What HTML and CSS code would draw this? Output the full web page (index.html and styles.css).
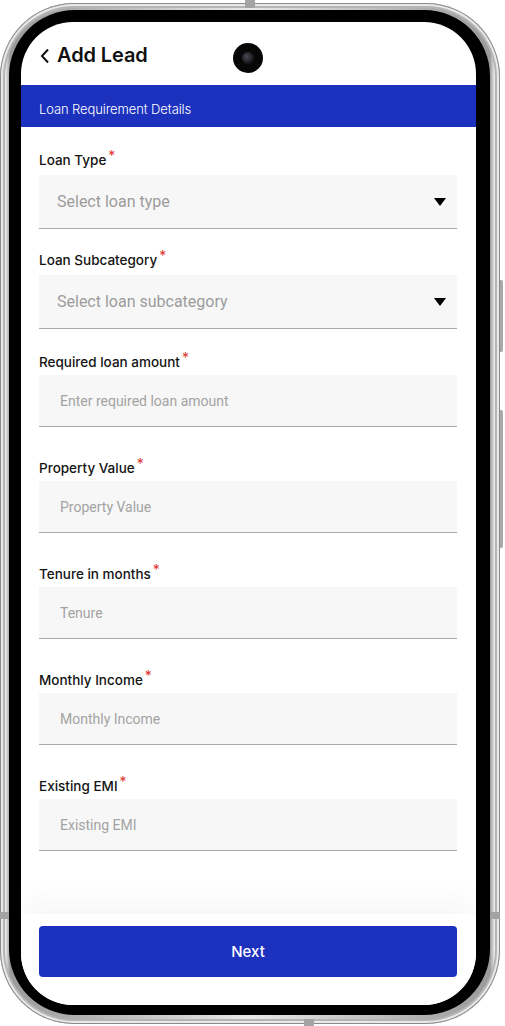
FILE: index.html
```html
<!DOCTYPE html>
<html>
<head>
<meta charset="utf-8">
<link rel="stylesheet" href="styles.css">
</head>
<body>
<div class="phone">
  <span class="btn btn-a"></span>
  <span class="btn btn-b"></span>
  <span class="seam seam-top"></span>
  <span class="seam seam-bottom"></span>
  <span class="seam seam-l2"></span>
  <span class="seam seam-r2"></span>
  <div class="bezel">
    <div class="screen">
      <span class="camera"><span class="lens"></span></span>
      <header class="topbar">
        <svg class="back" width="10" height="16" viewBox="0 0 10 16"><path d="M8 1.5 L2 8 L8 14.5" fill="none" stroke="#111" stroke-width="2"/></svg>
        <h1 class="title">Add Lead</h1>
      </header>
      <div class="band">Loan Requirement Details</div>
      <form class="form">
        <div class="field sel">
          <label class="label">Loan Type<span class="req">*</span></label>
          <div class="box select"><span class="ph big">Select loan type</span><span class="caret"></span></div>
        </div>
        <div class="field sel">
          <label class="label">Loan Subcategory<span class="req">*</span></label>
          <div class="box select"><span class="ph big">Select loan subcategory</span><span class="caret"></span></div>
        </div>
        <div class="field">
          <label class="label">Required loan amount<span class="req">*</span></label>
          <div class="box input"><span class="ph">Enter required loan amount</span></div>
        </div>
        <div class="field">
          <label class="label">Property Value<span class="req">*</span></label>
          <div class="box input"><span class="ph">Property Value</span></div>
        </div>
        <div class="field">
          <label class="label">Tenure in months<span class="req">*</span></label>
          <div class="box input"><span class="ph">Tenure</span></div>
        </div>
        <div class="field">
          <label class="label">Monthly Income<span class="req">*</span></label>
          <div class="box input"><span class="ph">Monthly Income</span></div>
        </div>
        <div class="field">
          <label class="label">Existing EMI<span class="req">*</span></label>
          <div class="box input"><span class="ph">Existing EMI</span></div>
        </div>
      </form>
      <footer class="footer">
        <button class="next" type="button">Next</button>
      </footer>
    </div>
  </div>
</div>
</body>
</html>
```
FILE: styles.css
```css
html, body {
  margin: 0;
  padding: 0;
  background: #ffffff;
}
body {
  width: 505px;
  height: 1026px;
  overflow: hidden;
  font-family: Inter, "Noto Sans", sans-serif;
}
.phone {
  position: relative;
  box-sizing: border-box;
  width: 500px;
  height: 1021px;
  margin-top: 3px;
  padding: 7px 10px 9px 9px;
  border-radius: 74px;
  background: linear-gradient(90deg, #c9c9c9 0%, #f4f4f4 1%, #9a9a9a 2%, #e8e8e8 50%, #9a9a9a 98%, #f2f2f2 99%, #bdbdbd 100%);
  box-shadow: inset 0 0 0 1px #8a8a8a, inset 0 0 0 3px #e9e9e9, inset 0 0 0 5px #b5b5b5;
}
.btn {
  position: absolute;
  right: -3px;
  width: 3px;
  background: #a9a9a9;
  border-radius: 0 2px 2px 0;
}
.btn-a { top: 277px; height: 72px; }
.btn-b { top: 407px; height: 138px; }
.seam {
  position: absolute;
  background: #a3a3a3;
}
.seam-top { top: -3px; left: 245px; width: 10px; height: 8px; }
.seam-bottom { bottom: -2px; left: 304px; width: 10px; height: 7px; }
.seam-l2 { left: 0; top: 909px; width: 9px; height: 7px; }
.seam-r2 { right: 0; top: 909px; width: 10px; height: 7px; }
.bezel {
  box-sizing: border-box;
  height: 100%;
  padding: 12px 14px 10px 12px;
  border-radius: 66px;
  background: #000;
}
.screen {
  position: relative;
  height: 100%;
  border-radius: 52px;
  background: #fff;
  overflow: hidden;
  display: flex;
  flex-direction: column;
}
.camera {
  position: absolute;
  left: 212px;
  top: 21px;
  width: 30px;
  height: 30px;
  border-radius: 50%;
  background: #070707;
  display: flex;
  align-items: center;
  justify-content: center;
}
.lens {
  width: 12px;
  height: 12px;
  border-radius: 50%;
  background: radial-gradient(circle at 40% 40%, #4a4a55 0%, #1a1a1f 60%, #0a0a0a 100%);
}
.topbar {
  height: 63px;
  flex: none;
  display: flex;
  align-items: center;
  padding: 2px 0 0 19px;
  box-sizing: border-box;
  gap: 7px;
}
.back { flex: none; margin-top: 2px; }
.title {
  margin: 0;
  font-size: 20px;
  font-weight: 600;
  color: #111;
  letter-spacing: -0.1px;
}
.band {
  flex: none;
  height: 42px;
  box-sizing: border-box;
  background: #1c32be;
  color: #fff;
  font-size: 13px;
  font-weight: 300;
  display: flex;
  align-items: center;
  padding: 5px 0 0 18px;
  letter-spacing: -0.1px;
}
.form {
  flex: 1;
  margin: 0;
  padding: 23px 19px 0 18px;
  display: flex;
  flex-direction: column;
}
.field { display: flex; flex-direction: column; margin-bottom: 29px; }
.field.sel { margin-bottom: 21px; }
.label {
  font-size: 13.5px;
  font-weight: 500;
  color: #141414;
  line-height: 20px;
  height: 20px;
  margin-bottom: 5px;
}
.field:not(.sel) .label {
  padding-top: 2px;
  margin-bottom: 3px;
}
.req {
  color: #e0342f;
  font-size: 14px;
  font-weight: 400;
  margin-left: 2px;
  position: relative;
  top: -4px;
}
.box {
  box-sizing: border-box;
  background: #f7f7f7;
  border-bottom: 1.5px solid #a8a8a8;
  display: flex;
  align-items: center;
}
.select { height: 54px; padding: 0 11px 0 18px; }
.input { height: 52px; padding: 0 0 0 21px; }
.ph {
  font-family: Roboto, "Noto Sans", sans-serif;
  font-size: 14px;
  color: #a3a3a3;
  flex: 1;
}
.ph.big { font-size: 16px; color: #9c9c9c; }
.caret {
  width: 0;
  height: 0;
  border-left: 6.5px solid transparent;
  border-right: 6.5px solid transparent;
  border-top: 8px solid #000;
}
.footer {
  flex: none;
  height: 91px;
  box-sizing: border-box;
  padding: 12px 19px 0 18px;
  background: #fff;
  box-shadow: 0 -14px 26px rgba(0, 0, 0, 0.035);
}
.next {
  width: 100%;
  height: 51px;
  border: none;
  border-radius: 4px;
  background: #1c32be;
  color: #fff;
  font-family: Inter, "Noto Sans", sans-serif;
  font-size: 15px;
  font-weight: 500;
}
```
